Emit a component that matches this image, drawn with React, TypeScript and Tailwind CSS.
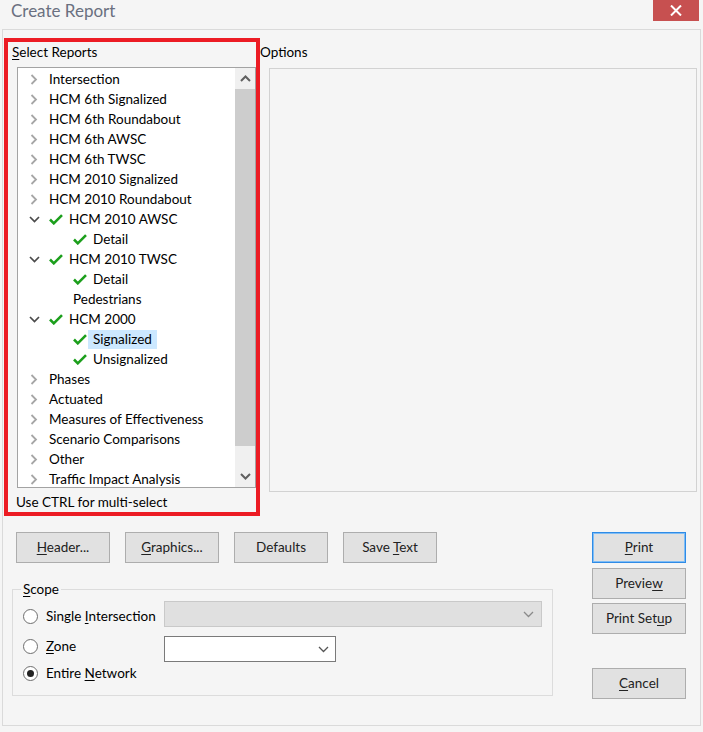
import React from "react";

const FONT = { fontFamily: "Lato, 'Liberation Sans', sans-serif" };

function Chevron({ open }: { open: boolean }) {
  return open ? (
    <svg width="11" height="7" viewBox="0 0 11 7">
      <path d="M1 1 L5.5 5.5 L10 1" fill="none" stroke="#4a4a4a" strokeWidth="1.7" />
    </svg>
  ) : (
    <svg width="8" height="11" viewBox="0 0 8 11">
      <path d="M1.5 1 L6 5.5 L1.5 10" fill="none" stroke="#a6a6a6" strokeWidth="1.8" />
    </svg>
  );
}

function Check() {
  return (
    <svg width="14" height="11" viewBox="0 0 14 11">
      <path d="M1 5.5 L4.8 9.3 L13 1.2" fill="none" stroke="#1c9f1c" strokeWidth="2.6" />
    </svg>
  );
}

type Row =
  | { kind: "top"; label: string; open?: boolean; checked?: boolean }
  | { kind: "child"; label: string; checked?: boolean; selected?: boolean };

const rows: Row[] = [
  { kind: "top", label: "Intersection" },
  { kind: "top", label: "HCM 6th Signalized" },
  { kind: "top", label: "HCM 6th Roundabout" },
  { kind: "top", label: "HCM 6th AWSC" },
  { kind: "top", label: "HCM 6th TWSC" },
  { kind: "top", label: "HCM 2010 Signalized" },
  { kind: "top", label: "HCM 2010 Roundabout" },
  { kind: "top", label: "HCM 2010 AWSC", open: true, checked: true },
  { kind: "child", label: "Detail", checked: true },
  { kind: "top", label: "HCM 2010 TWSC", open: true, checked: true },
  { kind: "child", label: "Detail", checked: true },
  { kind: "child", label: "Pedestrians" },
  { kind: "top", label: "HCM 2000", open: true, checked: true },
  { kind: "child", label: "Signalized", checked: true, selected: true },
  { kind: "child", label: "Unsignalized", checked: true },
  { kind: "top", label: "Phases" },
  { kind: "top", label: "Actuated" },
  { kind: "top", label: "Measures of Effectiveness" },
  { kind: "top", label: "Scenario Comparisons" },
  { kind: "top", label: "Other" },
  { kind: "top", label: "Traffic Impact Analysis" },
];

function TreeRow({ r }: { r: Row }) {
  if (r.kind === "top") {
    return (
      <div className="flex h-[20px] shrink-0 items-center">
        <div className="ml-[8px] flex w-[16px] items-center justify-center">
          <Chevron open={!!r.open} />
        </div>
        {r.checked ? (
          <>
            <div className="ml-[6px] flex w-[16px] items-center justify-center">
              <Check />
            </div>
            <span className="whitespace-nowrap pl-[5px]">{r.label}</span>
          </>
        ) : (
          <span className="ml-[3px] whitespace-nowrap pl-[4px]">{r.label}</span>
        )}
      </div>
    );
  }
  return (
    <div className="flex h-[20px] shrink-0 items-center">
      <div className="w-[53px] shrink-0" />
      {r.checked ? (
        <>
          <div className="flex w-[17px] items-center justify-center">
            <Check />
          </div>
          <span
            className={
              "flex h-[19px] items-center whitespace-nowrap pl-[5px] pr-[5px] " +
              (r.selected ? "bg-[#cce8ff]" : "")
            }
          >
            {r.label}
          </span>
        </>
      ) : (
        <span className="whitespace-nowrap pl-[2px]">{r.label}</span>
      )}
    </div>
  );
}

function Btn({
  children,
  primary,
  className = "",
}: {
  children: React.ReactNode;
  primary?: boolean;
  className?: string;
}) {
  return (
    <div
      className={
        "flex h-[31px] w-[94px] items-center justify-center border bg-[#e1e1e1] text-[#222] " +
        (primary ? "border-[#2f8be6] shadow-[inset_0_0_0_1px_#7fbdf5] " : "border-[#adadad] ") +
        className
      }
    >
      {children}
    </div>
  );
}

function Radio({ checked }: { checked?: boolean }) {
  return (
    <div className="flex h-[15px] w-[15px] shrink-0 items-center justify-center rounded-full border border-[#6e6e6e] bg-white">
      {checked && <div className="h-[7px] w-[7px] rounded-full bg-[#222]" />}
    </div>
  );
}

function ComboChevron({ color }: { color: string }) {
  return (
    <svg width="11" height="7" viewBox="0 0 11 7">
      <path d="M1 1 L5.5 5.5 L10 1" fill="none" stroke={color} strokeWidth="1.3" />
    </svg>
  );
}

function ScrollArrow({ up }: { up?: boolean }) {
  return (
    <svg width="11" height="7" viewBox="0 0 11 7">
      <path
        d={up ? "M1 6 L5.5 1.5 L10 6" : "M1 1 L5.5 5.5 L10 1"}
        fill="none"
        stroke="#606060"
        strokeWidth="2"
      />
    </svg>
  );
}

export default function App() {
  return (
    <div className="h-[732px] w-[703px] overflow-hidden bg-[#f5f5f5] text-[13.5px] text-black" style={FONT}>
      {/* Title bar */}
      <div className="flex h-[29px] items-start justify-between">
        <div className="pl-[11px] text-[17px] leading-[22px] text-[#6a7080]">Create Report</div>
        <div className="mr-[4px] flex h-[21px] w-[46px] items-center justify-center bg-[#c75050]">
          <svg width="12" height="11" viewBox="0 0 12 11">
            <path d="M1 0.5 L11 10.5 M11 0.5 L1 10.5" stroke="white" strokeWidth="2" />
          </svg>
        </div>
      </div>

      {/* Frame */}
      <div className="ml-[2px] flex h-[697px] w-[699px] flex-col border border-[#dadada]">
        {/* Top section */}
        <div className="flex pl-[1px] pt-[8px]">
          {/* Select Reports (red highlighted) */}
          <div className="flex h-[478px] w-[256px] flex-col border-4 border-[#ec1c24]">
            <div className="h-[26px] pl-[4px] leading-[20px]">
              <u className="underline-offset-2">S</u>elect Reports
            </div>
            <div className="ml-[9px] flex h-[421px] border border-[#a3a3a3] bg-white">
              <div className="flex flex-1 flex-col overflow-hidden pt-[1px]">
                {rows.map((r, i) => (
                  <TreeRow key={i} r={r} />
                ))}
              </div>
              <div className="flex w-[20px] shrink-0 flex-col bg-[#f0f0f0]">
                <div className="flex h-[20px] items-center justify-center">
                  <ScrollArrow up />
                </div>
                <div className="mt-[1px] h-[357px] bg-[#cdcdcd]" />
                <div className="h-[20px]" />
                <div className="flex h-[20px] items-center justify-center">
                  <ScrollArrow />
                </div>
              </div>
            </div>
            <div className="pl-[8px] pt-[4px] leading-[20px]">Use CTRL for multi-select</div>
          </div>

          {/* Options */}
          <div className="flex flex-col pt-[4px]">
            <div className="h-[26px] leading-[20px]">Options</div>
            <div className="ml-[9px] h-[424px] w-[428px] border border-[#d2d2d2]" />
          </div>
        </div>

        {/* Bottom section */}
        <div className="mt-[16px] flex">
          <div className="ml-[9px] flex w-[541px] flex-col">
            <div className="flex gap-[15px] pl-[4px]">
              <Btn>
                <span>
                  <u className="underline-offset-2">H</u>eader...
                </span>
              </Btn>
              <Btn>
                <span>
                  <u className="underline-offset-2">G</u>raphics...
                </span>
              </Btn>
              <Btn>Defaults</Btn>
              <Btn>
                <span>
                  Save <u className="underline-offset-2">T</u>ext
                </span>
              </Btn>
            </div>

            <fieldset className="mt-[16px] h-[117px] border border-[#dcdcdc]">
              <legend className="ml-[8px] px-[2px] leading-[20px]">
                <u className="underline-offset-2">S</u>cope
              </legend>
              <div className="flex flex-col pl-[10px]">
                <div className="mt-[2px] flex h-[26px]">
                  <div className="flex w-[141px] items-center pt-[4px]">
                    <Radio />
                    <span className="ml-[8px] whitespace-nowrap">
                      Single <u className="underline-offset-2">I</u>ntersection
                    </span>
                  </div>
                  <div className="flex h-[26px] w-[378px] items-center justify-end border border-[#c9c9c9] bg-[#e0e0e0] pr-[7px]">
                    <ComboChevron color="#8a8a8a" />
                  </div>
                </div>
                <div className="mt-[9px] flex h-[26px]">
                  <div className="flex w-[141px] items-center pb-[6px]">
                    <Radio />
                    <span className="ml-[8px]">
                      <u className="underline-offset-2">Z</u>one
                    </span>
                  </div>
                  <div className="flex h-[26px] w-[172px] items-center justify-end border border-[#7a7a7a] bg-white pr-[6px]">
                    <ComboChevron color="#555" />
                  </div>
                </div>
                <div className="mt-[1px] flex h-[20px] items-center">
                  <Radio checked />
                  <span className="ml-[8px]">
                    Entire <u className="underline-offset-2">N</u>etwork
                  </span>
                </div>
              </div>
            </fieldset>
          </div>

          <div className="ml-[39px] flex flex-col">
            <Btn primary>
              <span>
                <u className="underline-offset-2">P</u>rint
              </span>
            </Btn>
            <Btn className="mt-[5px]">
              <span>
                Previe<u className="underline-offset-2">w</u>
              </span>
            </Btn>
            <Btn className="mt-[4px]">
              <span>
                Print Set<u className="underline-offset-2">u</u>p
              </span>
            </Btn>
            <Btn className="mt-[34px]">
              <span>
                <u className="underline-offset-2">C</u>ancel
              </span>
            </Btn>
          </div>
        </div>
      </div>
    </div>
  );
}
